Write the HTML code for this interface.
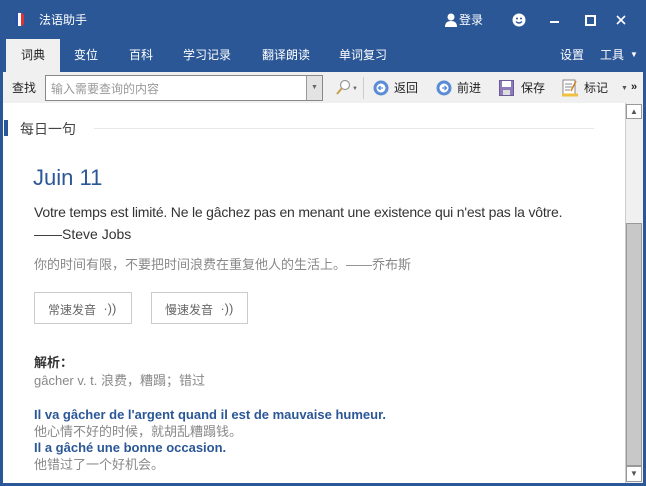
<!DOCTYPE html><html><head><meta charset="utf-8"><style>
*{margin:0;padding:0;box-sizing:border-box}
body{width:646px;height:486px;background:#2b5797;font-family:"Liberation Sans","Noto Sans CJK SC",sans-serif;position:relative;overflow:hidden}
.a{position:absolute;white-space:nowrap;line-height:1}
.w{color:#fff;font-size:12px}
.t{font-size:12px;color:#222}
</style></head><body>
<div class="a" style="left:15px;top:13px;width:9px;height:13px;border-radius:3px;background:linear-gradient(90deg,#2a4fa8 33%,#fff 33%,#fff 66%,#d33 66%)"></div>
<div class="a w" style="left:39px;top:14px">法语助手</div>
<svg class="a" style="left:445px;top:13px" width="12" height="14"><circle cx="6" cy="4" r="3.5" fill="#fff"/><path d="M0 14 Q0 8 6 8 Q12 8 12 14Z" fill="#fff"/></svg>
<div class="a w" style="left:459px;top:14px">登录</div>
<svg class="a" style="left:512px;top:13px" width="14" height="14"><circle cx="7" cy="7" r="6.5" fill="#fff"/><circle cx="5" cy="5.5" r="1" fill="#2b5797"/><circle cx="9" cy="5.5" r="1" fill="#2b5797"/><path d="M4 8.5 Q7 11.5 10 8.5" stroke="#2b5797" stroke-width="1.3" fill="none"/></svg>
<div class="a" style="left:550px;top:21px;width:9px;height:2px;background:#fff"></div>
<div class="a" style="left:585px;top:15px;width:11px;height:11px;border:2px solid #fff;border-top-width:2px"></div>
<svg class="a" style="left:616px;top:15px" width="10" height="10"><path d="M1 1L9 9M9 1L1 9" stroke="#fff" stroke-width="1.6"/></svg>
<div class="a" style="left:6px;top:39px;width:54px;height:33px;background:#f0f0f0"></div>
<div class="a" style="left:21px;top:49px;font-size:12px;color:#222">词典</div>
<div class="a w" style="left:74px;top:49px">变位</div>
<div class="a w" style="left:129px;top:49px">百科</div>
<div class="a w" style="left:183px;top:49px">学习记录</div>
<div class="a w" style="left:262px;top:49px">翻译朗读</div>
<div class="a w" style="left:339px;top:49px">单词复习</div>
<div class="a w" style="left:560px;top:49px">设置</div>
<div class="a w" style="left:600px;top:49px">工具</div>
<div class="a w" style="left:630px;top:51px;font-size:8px">▼</div>
<div class="a" style="left:3px;top:72px;width:640px;height:31px;background:#f0f0f0"></div>
<div class="a t" style="left:12px;top:82px">查找</div>
<div class="a" style="left:45px;top:75px;width:278px;height:26px;border:1px solid #888;background:#fff;font-size:12px;color:#999;padding:7px 0 0 5px">输入需要查询的内容</div>
<div class="a" style="left:306px;top:76px;width:16px;height:24px;background:#e3e3e3;border-left:1px solid #999;font-size:7px;color:#666;text-align:center;line-height:24px">▼</div>
<svg class="a" style="left:335px;top:79px" width="16" height="18"><circle cx="10" cy="6" r="4.5" stroke="#999" fill="#fff" stroke-width="1.2"/><path d="M7 9 L2 15" stroke="#c8a050" stroke-width="2"/></svg>
<div class="a" style="left:352px;top:86px;font-size:6px;color:#666">▼</div>
<div class="a" style="left:363px;top:77px;width:1px;height:22px;background:#ccc"></div>
<svg class="a" style="left:373px;top:80px" width="16" height="16"><circle cx="8" cy="8" r="7.5" fill="#5b8dd6"/><circle cx="8" cy="8" r="4.5" fill="#fff"/><path d="M10 8H6M7.5 6L5.5 8L7.5 10" stroke="#5b8dd6" stroke-width="1.3" fill="none"/></svg>
<div class="a t" style="left:394px;top:82px">返回</div>
<svg class="a" style="left:436px;top:80px" width="16" height="16"><circle cx="8" cy="8" r="7.5" fill="#5b8dd6"/><circle cx="8" cy="8" r="4.5" fill="#fff"/><path d="M6 8H10M8.5 6L10.5 8L8.5 10" stroke="#5b8dd6" stroke-width="1.3" fill="none"/></svg>
<div class="a t" style="left:457px;top:82px">前进</div>
<svg class="a" style="left:499px;top:80px" width="15" height="16"><rect x="0.5" y="0.5" width="14" height="15" fill="#8e7cb8" stroke="#6a5a99"/><rect x="3" y="1" width="9" height="6" fill="#fff"/><rect x="4" y="10" width="7" height="5" fill="#ddd"/></svg>
<div class="a t" style="left:521px;top:82px">保存</div>
<svg class="a" style="left:562px;top:79px" width="16" height="18"><rect x="1" y="1" width="12" height="14" fill="#fff" stroke="#888"/><path d="M3 5h7M3 8h7M3 11h5" stroke="#888"/><path d="M0 16h16" stroke="#f0c040" stroke-width="3"/><path d="M14 2L9 12" stroke="#d08020" stroke-width="1.5"/></svg>
<div class="a t" style="left:584px;top:82px">标记</div>
<div class="a" style="left:621px;top:85px;font-size:7px;color:#555">▼</div>
<div class="a" style="left:631px;top:82px;font-size:11px;color:#222;font-weight:bold">»</div>
<div class="a" style="left:3px;top:103px;width:640px;height:380px;background:#fff"></div>
<div class="a" style="left:4px;top:120px;width:4px;height:16px;background:#2b5797"></div>
<div class="a" style="left:20px;top:122px;font-size:14px;color:#444">每日一句</div>
<div class="a" style="left:94px;top:128px;width:500px;height:1px;background:#e8e8e8"></div>
<div class="a" style="left:33px;top:167px;font-size:22px;color:#2b5797">Juin 11</div>
<div class="a" style="left:34px;top:205px;font-size:14px;color:#333;letter-spacing:-0.2px">Votre temps est limité. Ne le gâchez pas en menant une existence qui n'est pas la vôtre.</div>
<div class="a" style="left:34px;top:227px;font-size:14px;color:#333">——Steve Jobs</div>
<div class="a" style="left:34px;top:258px;font-size:13px;color:#888">你的时间有限，不要把时间浪费在重复他人的生活上。——乔布斯</div>
<div class="a" style="left:34px;top:292px;width:98px;height:32px;border:1px solid #ccc;font-size:12px;color:#666;padding:10px 0 0 13px">常速发音 <span style="font-size:13px;margin-left:4px;position:relative;top:-1px">·))</span></div>
<div class="a" style="left:151px;top:292px;width:97px;height:32px;border:1px solid #ccc;font-size:12px;color:#666;padding:10px 0 0 13px">慢速发音 <span style="font-size:13px;margin-left:4px;position:relative;top:-1px">·))</span></div>
<div class="a" style="left:34px;top:356px;font-size:13px;color:#333;font-weight:bold">解析：</div>
<div class="a" style="left:34px;top:374px;font-size:13px;color:#888">gâcher v. t. 浪费，糟蹋；错过</div>
<div class="a" style="left:34px;top:408px;font-size:13px;color:#2b5797;font-weight:bold">Il va gâcher de l'argent quand il est de mauvaise humeur.</div>
<div class="a" style="left:34px;top:425px;font-size:13px;color:#888">他心情不好的时候，就胡乱糟蹋钱。</div>
<div class="a" style="left:34px;top:441px;font-size:13px;color:#2b5797;font-weight:bold">Il a gâché une bonne occasion.</div>
<div class="a" style="left:34px;top:458px;font-size:13px;color:#888">他错过了一个好机会。</div>
<div class="a" style="left:625px;top:103px;width:18px;height:380px;background:#f0f0f0;border-left:1px solid #ccc"></div>
<div class="a" style="left:626px;top:104px;width:16px;height:15px;border:1px solid #999;background:#fff;font-size:8px;color:#555;text-align:center;line-height:13px">▲</div>
<div class="a" style="left:626px;top:223px;width:16px;height:243px;background:#c8c8c8;border:1px solid #999"></div>
<div class="a" style="left:626px;top:466px;width:16px;height:16px;border:1px solid #999;background:#fff;font-size:8px;color:#555;text-align:center;line-height:14px">▼</div>
</body></html>
